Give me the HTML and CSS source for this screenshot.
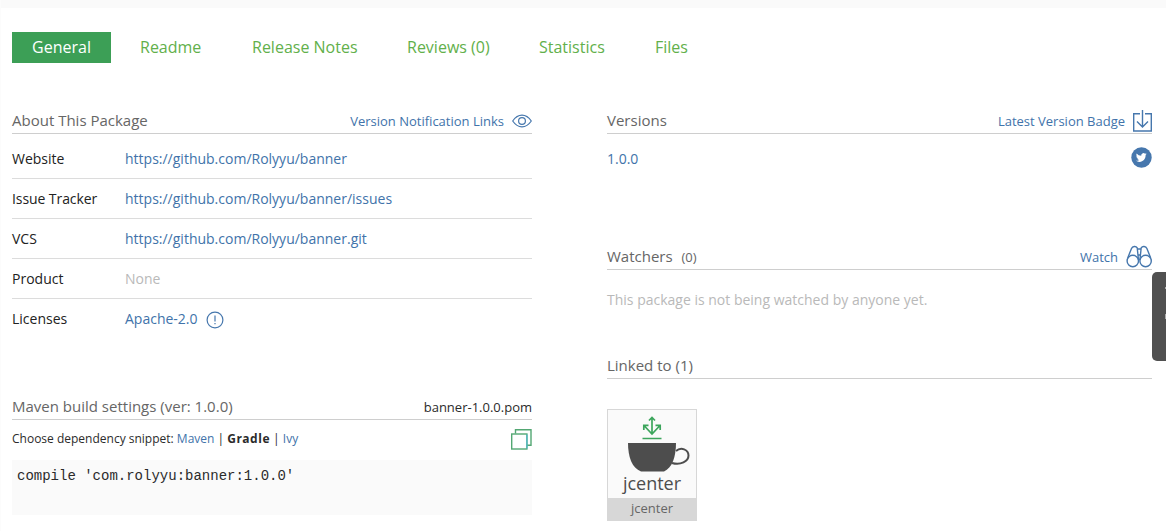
FILE: index.html
```html
<!DOCTYPE html>
<html lang="en">
<head>
<meta charset="utf-8">
<title>banner</title>
<link rel="stylesheet" href="styles.css">
</head>
<body>
<div class="strip"></div>
<nav class="tabs">
  <a class="tab active">General</a>
  <a class="tab readme">Readme</a>
  <a class="tab notes">Release Notes</a>
  <a class="tab reviews">Reviews (0)</a>
  <a class="tab stats">Statistics</a>
  <a class="tab files">Files</a>
</nav>
<main class="columns">
  <div class="left">
    <section>
      <header class="head"><h2>About This Package</h2>
        <a class="action">Version Notification Links
          <svg class="eye" width="20" height="14" viewBox="0 0 20 14"><path d="M.7 7C3.500 2.900 6.500 1.200 10 1.200S16.500 2.900 19.300 7C16.500 11.100 13.500 12.800 10 12.800S3.500 11.100.7 7Z"/><circle cx="10" cy="7" r="3.400"/></svg>
        </a>
      </header>
      <dl class="facts">
        <div class="fact first"><dt>Website</dt><dd><a>https://github.com/Rolyyu/banner</a></dd></div>
        <div class="fact"><dt class="tight">Issue Tracker</dt><dd><a>https://github.com/Rolyyu/banner/issues</a></dd></div>
        <div class="fact"><dt>VCS</dt><dd><a>https://github.com/Rolyyu/banner.git</a></dd></div>
        <div class="fact"><dt>Product</dt><dd class="muted">None</dd></div>
        <div class="fact last"><dt>Licenses</dt><dd class="license"><a>Apache-2.0</a><svg class="info" width="18" height="18" viewBox="0 0 18 18"><circle cx="9" cy="9" r="7.900"/><path d="M9 4.500v6M9 12v1.300"/></svg></dd></div>
      </dl>
    </section>
    <section class="maven">
      <header class="head"><h2>Maven build settings (ver: 1.0.0)</h2><span class="pom">banner-1.0.0.pom</span></header>
      <div class="snippet">
        <p>Choose dependency snippet: <a>Maven</a> | <b>Gradle</b> | <a>Ivy</a></p>
        <svg class="copy" width="21" height="21" viewBox="0 0 21 21"><path d="M4.500 4.500V.700H20V16.300H16"/><rect x=".7" y="5" width="15.200" height="15"/><path class="edge" d="M15.900 5.500v14"/></svg>
      </div>
      <pre class="code">compile 'com.rolyyu:banner:1.0.0'</pre>
    </section>
  </div>
  <div class="right">
    <section>
      <header class="head"><h2>Versions</h2>
        <a class="action">Latest Version Badge
          <svg class="badge" width="19" height="22" viewBox="0 0 19 22"><path d="M7 3.700H.7V21h17.600V3.700h-6.300M9.500 0v16.500M4 11.500 9.500 17l5.500-5.500"/></svg>
        </a>
      </header>
      <div class="version"><a>1.0.0</a>
        <svg width="21" height="21" viewBox="0 0 21 21"><circle cx="10.500" cy="10.500" r="10.200" fill="#4677ad"/><path transform="translate(4.800 4.900) scale(.485)" fill="#fff" d="M22.500 4.600a9.500 9.500 0 0 1-2.600.700A4.600 4.600 0 0 0 21.900 2.800a9 9 0 0 1-2.900 1.100A4.600 4.600 0 0 0 11.200 8 13 13 0 0 1 1.700 3.200a4.600 4.600 0 0 0 1.400 6.100A4.500 4.500 0 0 1 1 8.700a4.600 4.600 0 0 0 3.700 4.600 4.600 4.600 0 0 1-2 .1A4.600 4.600 0 0 0 7 16.500a9.200 9.200 0 0 1-6.800 1.900A13 13 0 0 0 20.200 6.900a9 9 0 0 0 2.300-2.300Z"/></svg>
      </div>
    </section>
    <section class="watchers">
      <header class="head"><h2>Watchers <small>(0)</small></h2>
        <a class="action">Watch
          <svg class="binoculars" width="26" height="23" viewBox="0 0 26 23"><circle cx="6.800" cy="16" r="5.700"/><circle cx="19.600" cy="16" r="5.700"/><path d="M1.700 13 5.500 3.500C6.500 1 10 .8 11.200 2.800L12.500 15M24.700 13 20.900 3.500C19.900 1 16.400.8 15.200 2.800L13.900 15M11.500 4h3.400M12.300 10h1.800"/></svg>
        </a>
      </header>
      <p class="empty">This package is not being watched by anyone yet.</p>
    </section>
    <section class="linked">
      <header class="head"><h2>Linked to (1)</h2></header>
      <div class="card">
        <div class="logo">
          <svg width="88" height="63" viewBox="0 0 88 63"><path d="M44 7v17M41 10.500l3-3 3 3M35.500 15l8.500 9L52.500 15M35.800 20v-4.700h4.700M52.200 20v-4.700h-4.700M34.500 28.500h19" fill="none" stroke="#3ca55c" stroke-width="1.700"/><path d="M20 33h48c0 14-4 25-12 28.500H33C24 58 20 47 20 33Z" fill="#4d4d4d"/><path d="M68 41c5-4.500 12.500-1.500 12.500 4.500 0 6-8 10-16.500 7.500" fill="none" stroke="#4d4d4d" stroke-width="2"/></svg>
          <span>jcenter</span>
        </div>
        <div class="caption">jcenter</div>
      </div>
    </section>
  </div>
</main>
<aside class="drawer"><i></i><i></i></aside>
</body>
</html>
```
FILE: styles.css
```css
* { box-sizing: border-box; }
body { margin: 0; height: 531px; overflow: hidden; position: relative; background: #fff; border-left: 1px solid #fcfcfc; font: 14px/20px "Open Sans", sans-serif; color: #2b2b2b; }
h2, p, dl, dd, pre { margin: 0; }
a { color: #4173aa; }
svg { display: block; flex: none; }
.strip { height: 8px; margin-left: -1px; background: #fafafa; }
.tabs { display: flex; padding: 24px 0 0 11px; }
.tab { height: 31px; line-height: 30px; font-size: 16px; color: #62b04b; white-space: nowrap; }
.tab.active { width: 99px; text-align: center; background: #3c9f56; color: #fff; }
.readme { margin-left: 29px; width: 112px; }
.notes { width: 155px; }
.reviews { width: 132px; }
.stats { width: 116px; }
.columns { display: grid; grid-template-columns: 520px 545px; gap: 75px; padding: 40px 0 0 11px; }
.head { height: 31px; border-bottom: 1px solid #cecece; display: flex; justify-content: space-between; align-items: center; padding-top: 5px; }
h2 { font-size: 15px; font-weight: 400; color: #666; white-space: nowrap; padding-bottom: 2px; }
h2 small { font-size: 13px; margin-left: 5px; }
.watchers h2 { padding-bottom: 0; }
.action { display: flex; align-items: center; gap: 8px; font-size: 13px; white-space: nowrap; }
.action svg { fill: none; stroke: #4677ad; stroke-width: 1.4; }
.action .eye { stroke-width: 1.2; }
.fact { display: flex; align-items: center; height: 40px; border-bottom: 1px solid #dcdcdc; }
.first { height: 45px; padding-top: 6px; }
.last { border: 0; }
dt { width: 113px; color: #222; }
.tight { letter-spacing: -.08px; }
.muted, .empty { color: #b9b9b9; }
.license { display: flex; gap: 8px; }
.info { margin-top: 2px; fill: none; stroke: #4677ad; stroke-width: 1.2; }
.maven { margin-top: 50px; }
.pom { font-size: 13px; padding-top: 1px; }
.snippet { display: flex; justify-content: space-between; height: 40px; padding-top: 9px; font-size: 12px; }
.snippet b { letter-spacing: .5px; }
.copy { fill: none; stroke: #53a773; stroke-width: 1.4; }
.copy rect { fill: #fff; }
.copy .edge { stroke: #57b9c7; }
.code { height: 55px; padding: 6px 5px; background: #fafafa; font: 14px/20px "Liberation Mono", monospace; }
.version { display: flex; justify-content: space-between; height: 50px; padding-top: 13px; }
.version a { line-height: 24px; }
.watchers { margin-top: 55px; }
.empty { height: 60px; line-height: 60px; }
.linked { margin-top: 18px; }
.card { margin-top: 30px; width: 90px; height: 112px; border: 1px solid #d7d7d7; background: #fafafa; text-align: center; }
.logo { height: 88px; font-size: 18px; font-weight: 500; line-height: 20px; color: #4d4d4d; }
.caption { height: 22px; line-height: 20px; background: #d7d7d7; font-size: 13px; color: #666; }
.drawer { position: absolute; right: 0; top: 272px; width: 14px; height: 89px; border-radius: 5px 0 0 5px; background: #505050; display: flex; flex-direction: column; align-items: flex-end; padding-top: 15px; gap: 25px; }
.drawer i { width: 1px; height: 2px; background: #aaa; }
.drawer i + i { height: 5px; }
```
